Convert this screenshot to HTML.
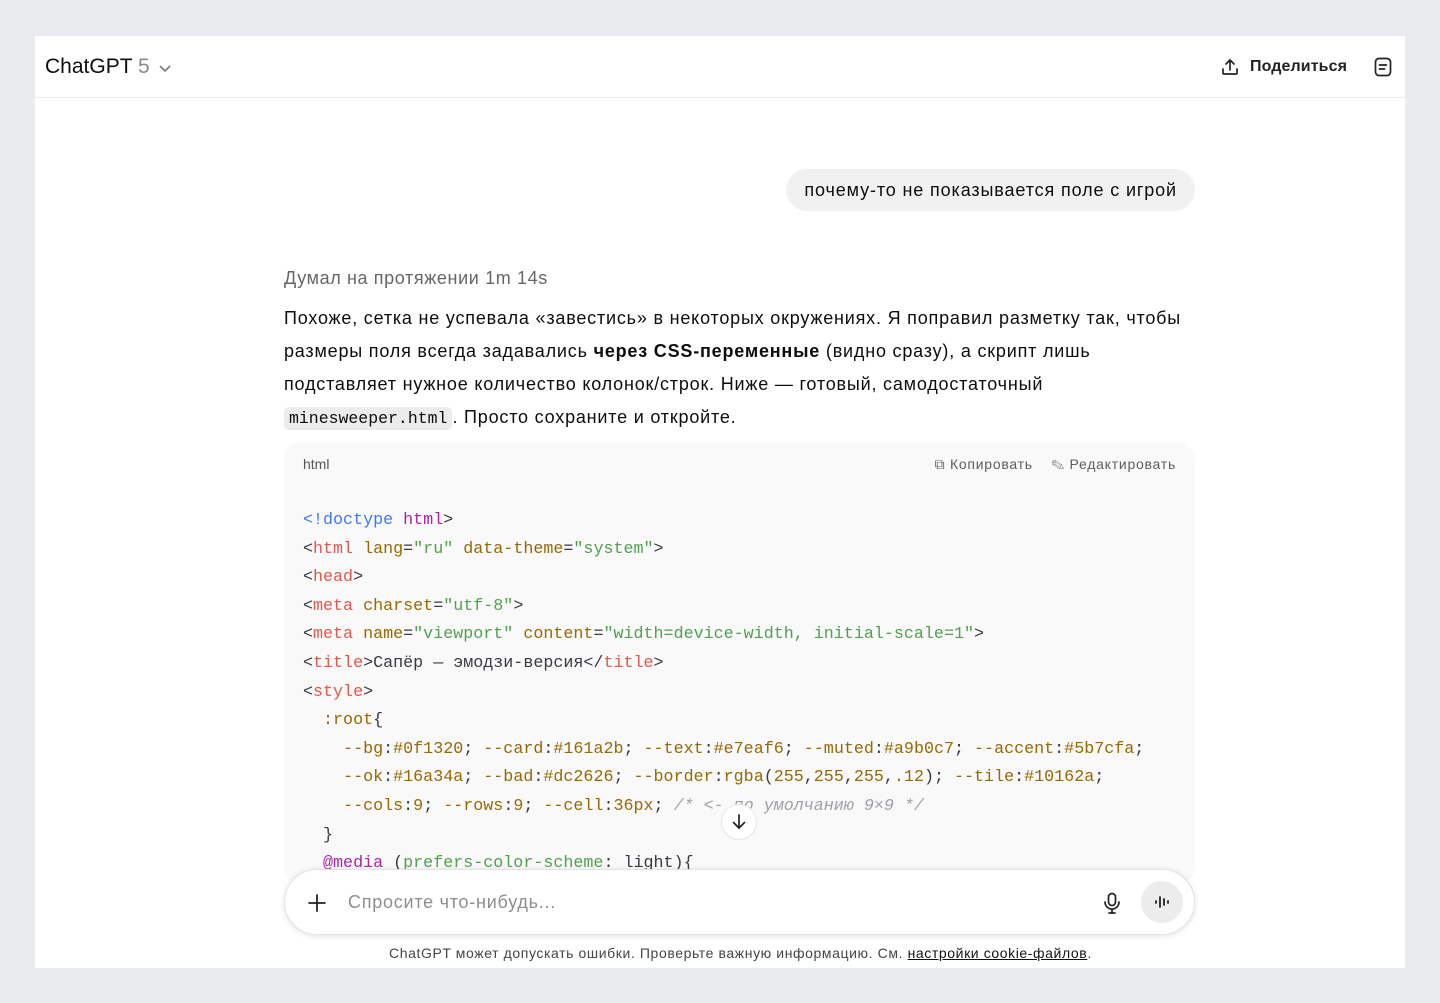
<!DOCTYPE html>
<html><head><meta charset="utf-8">
<style>
*{box-sizing:border-box;margin:0;padding:0}
body{width:1440px;height:1003px;background:#e9ebee;font-family:"Liberation Sans",sans-serif;color:#0d0d0d;position:relative;overflow:hidden}
.card{position:absolute;left:35px;top:36px;width:1370px;height:932px;background:#fff;overflow:hidden}
.hdr{height:62px;border-bottom:1px solid #ececec;position:relative}
.logo{position:absolute;left:10px;top:19px;font-size:21px}
.logo span{color:#8a8a8a}
.share{position:absolute;left:1185px;top:21px;font-size:16px;font-weight:bold;color:#222;display:flex;align-items:center;gap:10px;letter-spacing:.1px}
.bubble{position:absolute;right:210px;top:133px;background:#f1f1f1;border-radius:22px;padding:11px 18px;font-size:18px;height:42px;letter-spacing:.87px}
.think{position:absolute;left:249px;top:232px;font-size:18px;color:#666;letter-spacing:.62px}
.para{position:absolute;left:249px;top:266px;width:950px;font-size:18px;line-height:33px;letter-spacing:.8px;white-space:nowrap}
.para code{font-family:"Liberation Mono",monospace;font-size:16.5px;background:#ececec;border-radius:5px;padding:2px 5px;letter-spacing:0}
.code{position:absolute;left:249px;top:407px;width:911px;height:440px;background:#f9f9f9;border-radius:16px;overflow:hidden}
.chead{position:absolute;left:19px;top:13px;font-size:14px;color:#555}
.act{position:absolute;right:19px;top:13px;font-size:14px;color:#5d5d5d;letter-spacing:.75px}
pre{position:absolute;left:19px;top:64px;font-family:"Liberation Mono",monospace;font-size:16.7px;line-height:28.6px;color:#383a42}
.b{color:#4078f2}.p{color:#a626a4}.r{color:#e45649}.y{color:#986801}.g{color:#50a14f}.c{color:#a0a1a7;font-style:italic}
.down{position:absolute;left:686px;top:768px;width:36px;height:36px;border-radius:50%;background:#fff;border:1px solid #e5e5e5;display:flex;align-items:center;justify-content:center}
.inp{position:absolute;left:249px;top:833px;width:911px;height:66px;background:#fff;border-radius:33px;box-shadow:0 1px 6px rgba(0,0,0,.12);border:1px solid #e3e3e3}
.ph{position:absolute;left:63px;top:22px;font-size:18px;color:#8e8e8e;letter-spacing:.75px}
.voice{position:absolute;right:11px;top:11px;width:42px;height:42px;border-radius:50%;background:#ececec}
.foot{position:absolute;left:354px;top:909px;white-space:nowrap;font-size:14px;color:#444;letter-spacing:.6px}
.foot u{color:#111}
</style></head><body>
<div class="card">
 <div class="hdr">
  <div class="logo">ChatGPT <span>5</span> <svg width="14" height="10" viewBox="0 0 14 10" style="margin-left:2px"><path d="M2 3l5 5 5-5" fill="none" stroke="#777" stroke-width="1.6"/></svg></div>
  <div class="share"><svg width="20" height="20" viewBox="0 0 20 20" fill="none" stroke="#222" stroke-width="1.7" stroke-linecap="round"><path d="M10 13V3M6 7l4-4 4 4M3 12v4a1 1 0 0 0 1 1h12a1 1 0 0 0 1-1v-4"/></svg>Поделиться</div>
  <svg style="position:absolute;left:1339px;top:21px" width="18" height="20" viewBox="0 0 18 20" fill="none" stroke="#222" stroke-width="1.7"><rect x="1.5" y="1.5" width="15" height="17" rx="3.5"/><path d="M5.5 8h7M5.5 12h5" stroke-linecap="round"/></svg>
 </div>
 <div class="bubble">почему-то не показывается поле с игрой</div>
 <div class="think">Думал на протяжении 1m 14s</div>
 <div class="para">Похоже, сетка не успевала «завестись» в некоторых окружениях. Я поправил разметку так, чтобы<br>размеры поля всегда задавались <b>через CSS-переменные</b> (видно сразу), а скрипт лишь<br>подставляет нужное количество колонок/строк. Ниже — готовый, самодостаточный<br><code>minesweeper.html</code>. Просто сохраните и откройте.</div>
 <div class="code">
  <div class="chead">html</div>
  <div class="act">⧉ Копировать &nbsp;&nbsp; ✎ Редактировать</div>
<pre><span class="b">&lt;!doctype</span> <span class="p">html</span>&gt;
&lt;<span class="r">html</span> <span class="y">lang</span>=<span class="g">"ru"</span> <span class="y">data-theme</span>=<span class="g">"system"</span>&gt;
&lt;<span class="r">head</span>&gt;
&lt;<span class="r">meta</span> <span class="y">charset</span>=<span class="g">"utf-8"</span>&gt;
&lt;<span class="r">meta</span> <span class="y">name</span>=<span class="g">"viewport"</span> <span class="y">content</span>=<span class="g">"width=device-width, initial-scale=1"</span>&gt;
&lt;<span class="r">title</span>&gt;Сапёр — эмодзи-версия&lt;/<span class="r">title</span>&gt;
&lt;<span class="r">style</span>&gt;
  <span class="y">:root</span>{
    <span class="y">--bg</span>:<span class="y">#0f1320</span>; <span class="y">--card</span>:<span class="y">#161a2b</span>; <span class="y">--text</span>:<span class="y">#e7eaf6</span>; <span class="y">--muted</span>:<span class="y">#a9b0c7</span>; <span class="y">--accent</span>:<span class="y">#5b7cfa</span>;
    <span class="y">--ok</span>:<span class="y">#16a34a</span>; <span class="y">--bad</span>:<span class="y">#dc2626</span>; <span class="y">--border</span>:<span class="y">rgba</span>(<span class="y">255</span>,<span class="y">255</span>,<span class="y">255</span>,<span class="y">.12</span>); <span class="y">--tile</span>:<span class="y">#10162a</span>;
    <span class="y">--cols</span>:<span class="y">9</span>; <span class="y">--rows</span>:<span class="y">9</span>; <span class="y">--cell</span>:<span class="y">36px</span>; <span class="c">/* &lt;- по умолчанию 9×9 */</span>
  }
  <span class="p">@media</span> (<span class="g">prefers-color-scheme</span>: light){</pre>
 </div>
 <div class="down"><svg width="18" height="18" viewBox="0 0 18 18" fill="none" stroke="#222" stroke-width="1.7" stroke-linecap="round"><path d="M9 2v13M3.5 9.5L9 15l5.5-5.5"/></svg></div>
 <div class="inp">
  <svg style="position:absolute;left:22px;top:23px" width="20" height="20" viewBox="0 0 20 20" stroke="#222" stroke-width="1.8" stroke-linecap="round"><path d="M10 2v16M2 10h16"/></svg>
  <div class="ph">Спросите что-нибудь...</div>
  <svg style="position:absolute;left:817px;top:22px" width="20" height="22" viewBox="0 0 20 22" fill="none" stroke="#222" stroke-width="1.7" stroke-linecap="round"><rect x="6.5" y="1.5" width="7" height="12" rx="3.5"/><path d="M3 10a7 7 0 0 0 14 0M10 17v4M7 21h6"/></svg>
  <div class="voice"><svg style="position:absolute;left:12px;top:12px" width="18" height="18" viewBox="0 0 18 18" stroke="#222" stroke-width="1.8" stroke-linecap="round"><path d="M3 8v2M7 4v10M11 6v6M15 8v2"/></svg></div>
 </div>
 <div class="foot">ChatGPT может допускать ошибки. Проверьте важную информацию. См. <u>настройки cookie-файлов</u>.</div>
</div>
</body></html>
